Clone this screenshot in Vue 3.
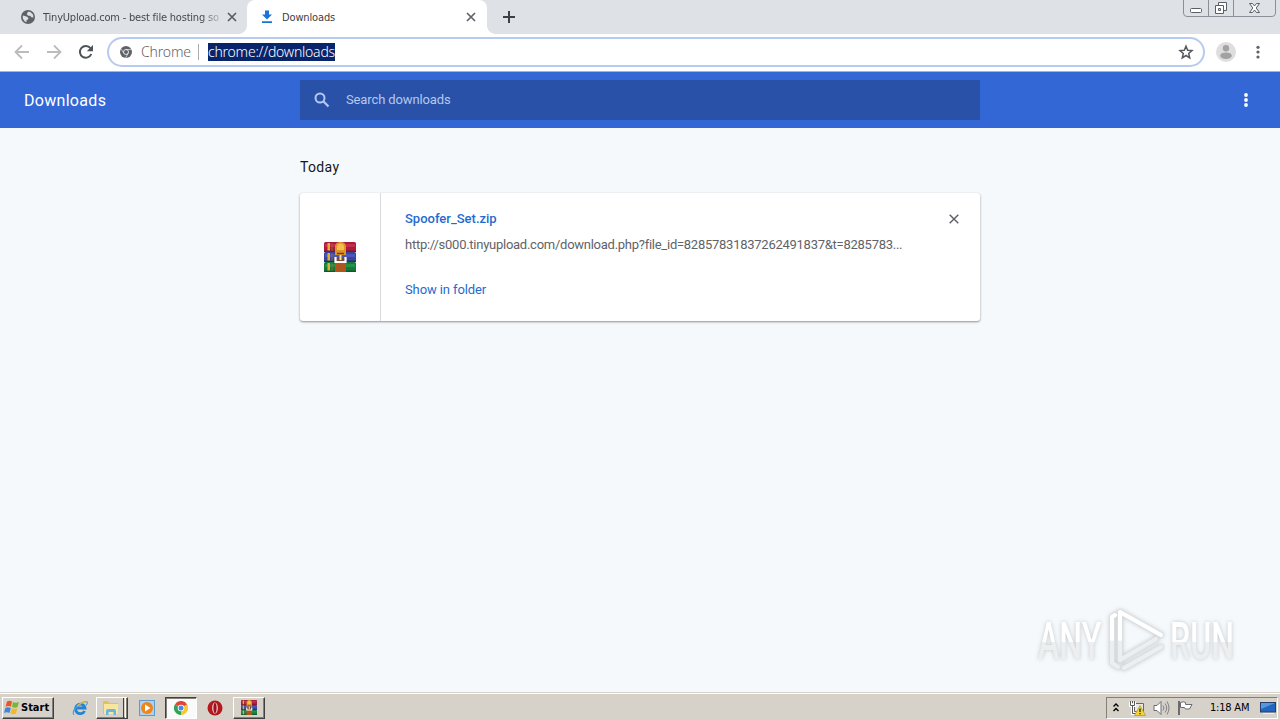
<template>
  <div class="screen">
    <svg class="defs" width="0" height="0">
      <symbol id="rar" viewBox="0 0 32 30">
        <rect x="0" y="0" width="32" height="10" rx="1.500" fill="#a81c3c" />
        <rect x="1" y="2" width="30" height="3" fill="#c42f4c" />
        <rect x="0" y="8.500" width="32" height="1.500" fill="#7d1530" />
        <rect x="0" y="10" width="32" height="10" rx="1.500" fill="#3a449f" />
        <rect x="1" y="12" width="30" height="3" fill="#4c58b8" />
        <rect x="0" y="18.500" width="32" height="1.500" fill="#282d68" />
        <rect x="0" y="20" width="32" height="10" rx="1.500" fill="#147a3a" />
        <rect x="1" y="22" width="30" height="3" fill="#259048" />
        <rect x="0" y="28.500" width="32" height="1.500" fill="#0e5a2c" />
        <path d="M3.500 1h2.500v7.500H3.500zM3.500 11h2.500v7.500H3.500zM3.500 21h2.500v7.500H3.500z" fill="#e0b030" />
        <path d="M8 1v8M8 11v8M8 21v8" stroke="#8a6a28" />
        <rect x="11" y="20" width="11" height="10" fill="#b0561c" />
        <path d="M11 13V5q0-5 5.500-5T22 5v8z" fill="#dd9426" />
        <path d="M13 5q0-3.500 3.500-3.500T20 5v3h-7z" fill="#f5bd4d" />
        <path d="M13 11.500h7" stroke="#7a3f12" stroke-width="1.500" />
        <path d="M11.500 15v5h10v-5" fill="#7c4b35" stroke="#fff" stroke-width="2.200" />
        <path d="M16.500 13v5" stroke="#f3dfb0" stroke-width="2" />
      </symbol>
    </svg>

    <div class="tabstrip">
      <div class="tab">
        <svg class="favicon" width="14" height="14" viewBox="0 0 14 14">
          <circle cx="7" cy="7" r="7" fill="#5f6368" />
          <path d="M2 5.500l3.500 1L7.500 8 7 9.500 5.500 10v2.300Q2 11 1.700 7zM7 1.700l2.300.3L12 4.500l.4 3-2-.3-1.200-1.500-2 .1L5.800 4z" fill="#dee1e6" />
        </svg>
        <span class="tab-title fade">TinyUpload.com - best file hosting so</span>
        <svg class="tab-close" width="10" height="10" viewBox="0 0 10 10"><path d="M1 1l8 8M9 1L1 9" stroke="#5a5e63" stroke-width="1.700" /></svg>
      </div>
      <div class="tab active">
        <svg class="favicon" width="14" height="14" viewBox="0 0 14 14">
          <path d="M5 0.500h4v4h3L7 9.500l-5-5h3zM2 11.200h10v1.800H2z" fill="#1a73d9" />
        </svg>
        <span class="tab-title">Downloads</span>
        <svg class="tab-close" width="10" height="10" viewBox="0 0 10 10"><path d="M1 1l8 8M9 1L1 9" stroke="#5f6368" stroke-width="1.700" /></svg>
      </div>
      <svg class="newtab" width="12" height="12" viewBox="0 0 12 12"><path d="M6 0v12M0 6h12" stroke="#3c4043" stroke-width="2" /></svg>
      <svg class="winbtns" width="94" height="17" viewBox="0 0 94 17">
        <path d="M.5 0v13q0 3.500 3.500 3.500h85q3.500 0 3.500-3.500V0M25.500 0v16M50.500 0v16" fill="none" stroke="#8b8f98" />
        <rect x="7.500" y="8.500" width="11" height="4" rx="1" fill="#fff" stroke="#5a5e68" />
        <path d="M35.500 2.500h8v8h-8z" fill="#fff" stroke="#5a5e68" />
        <path d="M32.500 5.500h8v8h-8z" fill="#fff" stroke="#5a5e68" />
        <path d="M35.500 8.500h2v2h-2z" fill="#dee1e6" stroke="#5a5e68" />
        <path d="M66.500 3.500h3l2 2.500 2-2.500h3l-3.300 4.500 3.300 4.500h-3l-2-2.500-2 2.500h-3L69.800 8z" fill="#fff" stroke="#5a5e68" />
      </svg>
    </div>

    <div class="toolbar">
      <svg class="nav-icon" width="16" height="16" viewBox="0 0 16 16"><path d="M15 8H2M8 1.500L1.500 8 8 14.500" fill="none" stroke="#babcbe" stroke-width="1.800" /></svg>
      <svg class="nav-icon" width="16" height="16" viewBox="0 0 16 16"><path d="M1 8h13M8 1.500L14.500 8 8 14.500" fill="none" stroke="#babcbe" stroke-width="1.800" /></svg>
      <svg class="nav-icon" width="16" height="16" viewBox="0 0 16 16">
        <path d="M13.300 10A5.900 5.900 0 1 1 12.500 4.200" fill="none" stroke="#4f5358" stroke-width="2" />
        <path d="M15 1v6.200H8.800z" fill="#4f5358" />
      </svg>
      <div class="omnibox">
        <svg width="12" height="12" viewBox="0 0 12 12">
          <circle cx="6" cy="6" r="6" fill="#5f6368" />
          <circle cx="6" cy="6" r="2.500" fill="#5f6368" stroke="#fff" stroke-width=".8" />
          <path d="M6 3.500h5.500M3.800 7.200L1 2.800M8.200 7.200L5.500 12" stroke="#fff" stroke-width=".6" />
        </svg>
        <span class="scheme">Chrome</span>
        <span class="divider"></span>
        <span class="url">chrome://downloads</span>
        <svg class="star" width="16" height="16" viewBox="0 0 16 16"><path d="M8 2.200l1.700 4 4.300.4-3.300 2.900 1 4.300L8 11.500l-3.700 2.300 1-4.300L2 6.600l4.300-.4z" fill="none" stroke="#55595e" stroke-width="1.500" /></svg>
      </div>
      <svg class="avatar" width="20" height="20" viewBox="0 0 20 20">
        <circle cx="10" cy="10" r="10" fill="#dedede" />
        <circle cx="10" cy="6.300" r="3.200" fill="#a2a2a2" />
        <ellipse cx="10" cy="13.700" rx="5.800" ry="3.300" fill="#a2a2a2" />
      </svg>
      <svg class="dots" width="4" height="14" viewBox="0 0 4 14"><circle v-for="y in [2.3, 7, 12]" :key="y" cx="2" :cy="y" r="1.600" fill="#5f6368" /></svg>
    </div>

    <header class="header">
      <h1>Downloads</h1>
      <div class="search">
        <svg width="16" height="16" viewBox="0 0 16 16"><circle cx="6" cy="6" r="4.500" fill="none" stroke="#b5c8ef" stroke-width="2" /><path d="M9.300 9.300l5.200 5.200" stroke="#b5c8ef" stroke-width="2.200" /></svg>
        <span>Search downloads</span>
      </div>
      <svg class="menu" width="4" height="14" viewBox="0 0 4 14"><circle v-for="y in [2, 7, 12]" :key="y" cx="2" :cy="y" r="1.900" fill="#fff" /></svg>
    </header>

    <main class="content">
      <h2>Today</h2>
      <div class="card">
        <div class="file-icon">
          <svg width="32" height="30"><use href="#rar" /></svg>
        </div>
        <div class="details">
          <a class="name">Spoofer_Set.zip</a>
          <div class="src">http://s000.tinyupload.com/download.php?file_id=82857831837262491837&amp;t=8285783...</div>
          <a class="show">Show in folder</a>
        </div>
        <svg class="remove" width="10" height="10" viewBox="0 0 10 10"><path d="M.7.700l8.600 8.600M9.300.7L.7 9.300" stroke="#5a5e63" stroke-width="1.400" /></svg>
      </div>

      <div class="watermark">
        <span class="wm">ANY</span>
        <svg width="58" height="64" viewBox="0 0 58 64">
          <g fill="none" stroke-linejoin="round" stroke-linecap="round">
            <path d="M5 9v46l6 4M13 4v48L49 31M13 4l41 23M13 4v53M17 60l37-21M5 9l3-2" stroke="#dcdfe1" stroke-width="5.500" />
            <path d="M5 9v46l6 4M13 4v48L49 31M13 4l41 23M17 60l37-21M5 9l3-2" stroke="#eceeef" stroke-width="4" />
            <path d="M5 31V9l3-2M13 31V4l41 23" stroke="#fff" stroke-width="4" />
          </g>
        </svg>
        <span class="wm">RUN</span>
      </div>
    </main>

    <footer class="taskbar">
      <div class="start">
        <svg width="16" height="15" viewBox="0 0 16 15">
          <path d="M3 1.500q2.500-1.500 5 0L7 6.800q-2.500-1.500-5.500 0z" fill="#e8562a" />
          <path d="M9 2q2.500 1.500 6 0l-1.500 5q-2.500 1.500-5.500 0z" fill="#7ab534" />
          <path d="M1.300 8q2.500-1.500 5.500 0L5.500 13q-2.500-1.500-5.500 0z" fill="#3f86d8" />
          <path d="M7.800 8.300q2.500 1.500 5.500 0L12 13.500q-2.500 1.500-5.500 0z" fill="#f5b921" />
        </svg>
        <span>Start</span>
      </div>
      <div class="quick">
        <div class="task">
          <svg width="16" height="16" viewBox="0 0 16 16">
            <path d="M12.600 11A4.800 4.800 0 1 1 13 8H4" fill="none" stroke="#2583d6" stroke-width="2.800" />
            <path d="M2 14.800Q-.5 11.500 5.500 6T15 1.800q1 1-1 3.500" fill="none" stroke="#4aa0e0" stroke-width="1.200" />
            <path d="M5 6.300Q11 1 14.500 2" fill="none" stroke="#e6b833" stroke-width="1.200" />
          </svg>
        </div>
        <div class="task raised folder">
          <svg width="18" height="17" viewBox="0 0 18 17">
            <path d="M1 3.500V2h5l1.500 2H16v11H1z" fill="#e2c05c" />
            <path d="M2 5h14v10H2z" fill="#f7e69c" />
            <path d="M4 16v-4q0-2 2-2h6q2 0 2 2v4h-2.500v-3h-5v3z" fill="#69b7df" />
          </svg>
          <span class="stack"></span>
        </div>
        <div class="task player">
          <svg width="16" height="16" viewBox="0 0 16 16">
            <rect x=".5" y=".5" width="15" height="15" fill="#add2ef" stroke="#5a9bd0" />
            <circle cx="8" cy="8" r="6" fill="#ef8418" /><path d="M6 4.500L11.500 8 6 11.500z" fill="#fff" />
          </svg>
        </div>
        <div class="task pressed">
          <svg width="14" height="14" viewBox="0 0 14 14">
            <path d="M7 7L.9 3.500A7 7 0 0 1 13.100 3.500z" fill="#e24436" />
            <path d="M7 7l6.100-3.500A7 7 0 0 1 7 14z" fill="#f9c829" />
            <path d="M7 7v7A7 7 0 0 1 .9 3.500z" fill="#33a351" />
            <circle cx="7" cy="7" r="3.300" fill="#fff" /><circle cx="7" cy="7" r="2.500" fill="#4688ee" />
          </svg>
        </div>
        <div class="task opera">
          <svg width="16" height="16" viewBox="0 0 16 16"><circle cx="8" cy="8" r="7.500" fill="#b5171e" /><ellipse cx="8" cy="8" rx="2.800" ry="5.500" fill="#f3dcdc" /><ellipse cx="8" cy="8" rx="1.600" ry="5" fill="#9a1218" /></svg>
        </div>
        <div class="task raised"><svg width="16" height="15"><use href="#rar" /></svg></div>
      </div>
      <div class="tray">
        <svg width="6" height="9" viewBox="0 0 6 9"><path d="M.5 3.500L3 1l2.500 2.500M.5 8L3 5.500 5.500 8" fill="none" stroke="#000" stroke-width="1.400" /></svg>
        <svg class="network" width="17" height="16" viewBox="0 0 17 16">
          <path d="M5.500 3.500h9v8h-9z" fill="#e8e8e6" stroke="#66666a" />
          <path d="M1.500 1.500v4h4v-4M3.500 5.500v8H8" fill="none" stroke="#fff" stroke-width="3" />
          <path d="M1.500 1v4.500h4V1M3.500 5.500v8H8M3.500 1v2" fill="none" stroke="#55555a" />
          <path d="M11 5.500l5.500 10h-11z" fill="#f5d533" stroke="#b59a1b" stroke-width=".8" /><path d="M11 8.500v3.500M11 13v1.300" stroke="#222" stroke-width="1.300" />
        </svg>
        <svg class="volume" width="17" height="16" viewBox="0 0 17 16">
          <path d="M1 5.500h3l4-4v13l-4-4H1z" fill="#fff" stroke="#6c6c70" />
          <path d="M10 5.500q2 2.500 0 5M12 3.500q3.500 4.500 0 9M14 1.500q4 6.500 0 13" fill="none" stroke="#808084" />
        </svg>
        <svg class="flag" width="17" height="16" viewBox="0 0 17 16">
          <path d="M3.500 2.500q3-1.500 5 0v2h6.500l-2.500 4.500H8.500l-1-1.500h-4z" fill="#fff" stroke="#6c6c70" />
          <path d="M2 1v14" stroke="#6c6c70" stroke-width="2" />
        </svg>
        <span class="clock">1:18 AM</span>
        <svg class="desktop" width="16" height="14" viewBox="0 0 16 14">
          <rect x=".5" y="1.500" width="15" height="9.500" fill="#2267bd" stroke="#23406b" /><path d="M1 2h14L1 8z" fill="#5798dc" /><path d="M3 12.500h11" stroke="#e8eef5" />
        </svg>
      </div>
    </footer>
  </div>
</template>

<script setup>
</script>

<style>
body {
  margin: 0;
  overflow: hidden;
}
</style>

<style scoped>
.screen {
  width: 1280px;
  height: 720px;
  display: flex;
  flex-direction: column;
  overflow: hidden;
  background: #f5f9fc;
  font-family: Roboto, "Liberation Sans", sans-serif;
}

.screen * {
  box-sizing: border-box;
}

svg {
  display: block;
  flex: none;
}

.defs {
  position: absolute;
}

span, a, h1, h2 {
  white-space: nowrap;
}

/* tab strip */
.tabstrip {
  height: 34px;
  flex: none;
  display: flex;
  align-items: flex-start;
  background: #dee1e6;
}

.tab {
  width: 247px;
  height: 34px;
  display: flex;
  align-items: center;
  padding-left: 21px;
  color: #45494d;
  font-family: "DejaVu Sans Condensed", "DejaVu Sans", sans-serif;
  font-stretch: condensed;
  font-size: 11px;
  letter-spacing: -0.14px;
}

.tab.active {
  position: relative;
  width: 240px;
  padding-left: 13px;
  background: #fff;
  border-radius: 8px 8px 0 0;
  color: #3c4043;
}

/* flared feet of the active tab */
.tab.active::before,
.tab.active::after {
  content: "";
  position: absolute;
  bottom: 0;
  width: 8px;
  height: 8px;
}

.tab.active::before {
  left: -8px;
  background: radial-gradient(circle at 0 0, transparent 7.5px, #fff 8px);
}

.tab.active::after {
  right: -8px;
  background: radial-gradient(circle at 100% 0, transparent 7.5px, #fff 8px);
}

.tab-title {
  width: 176px;
  margin-left: 8px;
}

.fade {
  letter-spacing: -0.2px;
  -webkit-mask-image: linear-gradient(90deg, #000 158px, transparent 182px);
  mask-image: linear-gradient(90deg, #000 158px, transparent 182px);
}

.tab-close {
  margin-left: 8px;
}

.newtab {
  margin: 11px 0 0 16px;
}

.winbtns {
  margin-left: auto;
  margin-right: 3px;
}

/* toolbar */
.toolbar {
  height: 38px;
  flex: none;
  display: flex;
  align-items: center;
  padding: 0 20px 2px 14px;
  background: #fff;
  border-bottom: 1px solid #9fb6dc;
}

.nav-icon {
  margin-right: 16px;
}

.omnibox {
  flex: 1;
  height: 30px;
  margin-left: -3px;
  display: flex;
  align-items: center;
  padding: 0 9px 0 11px;
  border: 2px solid #b6cbef;
  border-radius: 15px;
  font-family: "Noto Sans", sans-serif;
  font-size: 14px;
  color: #5f6368;
}

.scheme {
  margin-left: 9px;
  width: 49px;
  font-weight: 300;
  letter-spacing: -0.15px;
}

.divider {
  width: 1px;
  height: 16px;
  margin-left: 8px;
  background: #aaadb2;
}

.url {
  margin-left: 9px;
  height: 18px;
  line-height: 17px;
  background: #08246b;
  color: #fff;
  font-weight: 300;
  letter-spacing: -0.22px;
}

.star {
  margin-left: auto;
}

.avatar {
  margin-left: 11px;
}

.dots {
  margin-left: 20px;
}

/* page header */
.header {
  height: 56px;
  flex: none;
  display: flex;
  align-items: center;
  background: #3367d6;
  color: #fff;
}

h1 {
  width: 276px;
  margin: 0 0 0 24px;
  font-size: 16px;
  font-weight: 400;
  letter-spacing: 0.3px;
}

.search {
  width: 680px;
  height: 40px;
  display: flex;
  align-items: center;
  gap: 16px;
  padding-left: 14px;
  background: #2a51a8;
  color: #b5c8ef;
  font-size: 13px;
  letter-spacing: -0.12px;
}

.search span {
  padding-bottom: 2px;
}

.menu {
  margin-left: 264px;
}

/* list */
.content {
  flex: 1;
  display: flex;
  flex-direction: column;
  align-items: center;
}

h2 {
  width: 680px;
  margin: 30px 0 16px;
  font-size: 14px;
  line-height: 19px;
  font-weight: 400;
  letter-spacing: 0.35px;
  color: #151719;
}

.card {
  width: 680px;
  height: 128px;
  display: flex;
  background: #fff;
  border-radius: 3px;
  box-shadow: 0 1px 2px rgba(60, 64, 67, 0.45), 0 1px 3px rgba(60, 64, 67, 0.15);
}

.file-icon {
  width: 81px;
  display: flex;
  align-items: center;
  justify-content: center;
  border-right: 1px solid #d8dadd;
}

.details {
  width: 568px;
  padding: 16px 0 0 24px;
  font-size: 13px;
  line-height: 20px;
}

.name,
.show {
  display: block;
  color: #1f6bd0;
}

.name {
  font-weight: 500;
}

.show {
  letter-spacing: -0.1px;
}

.src {
  margin: 6px 0 25px;
  white-space: nowrap;
  letter-spacing: -0.26px;
  color: #5f6368;
}

.remove {
  margin-top: 21px;
}

/* watermark */
.watermark {
  align-self: flex-end;
  margin: auto 46px 20px 0;
  width: 196px;
  display: flex;
  align-items: center;
  gap: 5px;
  filter: drop-shadow(0 0 2px rgba(90, 95, 100, 0.32));
}

.wm {
  flex: none;
  width: 102px;
  margin-right: -38px;
  padding-top: 4px;
  font-size: 51px;
  line-height: 54px;
  font-weight: 500;
  transform: scaleX(0.63);
  transform-origin: left center;
  background: linear-gradient(#fff 54%, #eceeef 54%);
  -webkit-background-clip: text;
  background-clip: text;
  color: transparent;
}

/* taskbar */
.taskbar {
  height: 28px;
  flex: none;
  display: flex;
  align-items: center;
  padding: 2px 2px 0;
  background: #d6d2ca;
  border-top: 1px solid #d6d2ca;
  box-shadow: inset 0 1px #fff;
}

.start {
  width: 52px;
  height: 22px;
  display: flex;
  align-items: center;
  gap: 1px;
  padding-left: 1px;
  border: 1px solid;
  border-color: #fff #404040 #404040 #fff;
  box-shadow: inset -1px -1px #848078;
  color: #000;
  font: bold 11px "DejaVu Sans Condensed", "DejaVu Sans", sans-serif;
  font-stretch: condensed;
}

.quick {
  display: flex;
  align-items: center;
  margin-left: 10px;
}

.task {
  width: 32px;
  height: 22px;
  display: flex;
  align-items: center;
  justify-content: center;
}

.raised {
  border: 1px solid;
  border-color: #fff #404040 #404040 #fff;
  box-shadow: inset -1px -1px #848078;
}

.folder {
  padding-left: 3px;
}

.stack {
  width: 3px;
  height: 20px;
  margin-left: 3px;
  border-left: 1px solid #404040;
  border-right: 1px solid #fff;
}

.player {
  width: 37px;
}

.pressed {
  background: #fafafa;
  border: 1px solid;
  border-color: #404040 #fff #fff #404040;
  box-shadow: inset 1px 1px #848078;
}

.opera {
  width: 36px;
}

.tray {
  width: 172px;
  height: 22px;
  margin-left: auto;
  display: flex;
  align-items: center;
  padding-left: 6px;
  border: 1px solid;
  border-color: #848078 #fff #fff #848078;
}

.network {
  margin-left: 10px;
}

.volume {
  margin-left: 7px;
}

.flag {
  margin-left: 7px;
}

.clock {
  width: 42px;
  margin-left: 16px;
  color: #000;
  font: 11px "DejaVu Sans Condensed", "DejaVu Sans", sans-serif;
  font-stretch: condensed;
  letter-spacing: -0.2px;
}

.desktop {
  margin-left: 8px;
}
</style>
